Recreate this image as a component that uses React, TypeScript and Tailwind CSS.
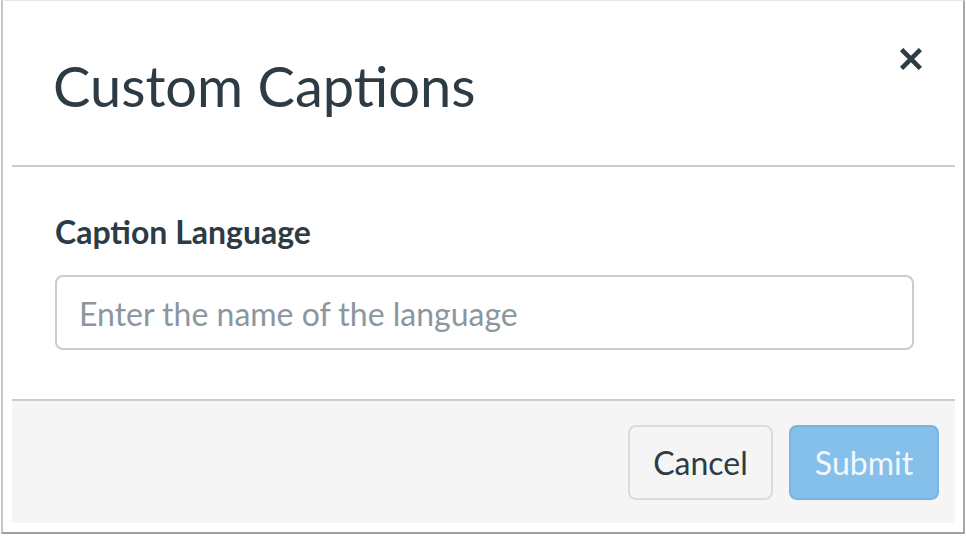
import React from "react";

export default function App() {
  return (
    <div className="w-[966px] h-[536px] bg-white overflow-hidden" style={{ fontFamily: "Lato, 'Open Sans', sans-serif" }}>
      <div className="ml-[1px] w-[964px] h-[534px] box-border border-t border-t-[#e6e6e6] border-l-2 border-l-[#c6c6c6] border-r-2 border-r-[#a8a8a8] border-b-2 border-b-[#a0a0a0] bg-white pl-[9px] pr-[8px] pb-[9px] flex flex-col">
        {/* Header */}
        <div className="h-[164px] flex justify-between items-start shrink-0">
          <h1 className="mt-[53px] pl-[41px] text-[56px] leading-[64px] font-normal text-[#2d3b45]">Custom Captions</h1>
          <button aria-label="Close" className="mt-[47px] mr-[33px] w-[22px] h-[22px] text-[#2d3b45]">
            <svg viewBox="0 0 22 22" width="22" height="22">
              <path d="M3.2 3.2 L18.8 18.8 M18.8 3.2 L3.2 18.8" stroke="currentColor" strokeWidth="4.6" strokeLinecap="square" fill="none" />
            </svg>
          </button>
        </div>
        <div className="h-[2px] bg-[#c7cdd1] shrink-0" />
        {/* Body */}
        <div className="h-[232px] pl-[43px] shrink-0">
          <label className="block mt-[45px] text-[32px] leading-[40px] font-bold text-[#2d3b45]">Caption Language</label>
          <input
            type="text"
            placeholder="Enter the name of the language"
            className="mt-[23px] block w-[859px] h-[75px] box-border border-2 border-[#c7cdd1] rounded-[8px] bg-white pl-[22px] pr-[22px] pt-[16px] pb-[15px] text-[32px] leading-[40px] text-[#2d3b45] placeholder:text-[#8b969e] outline-none"
            style={{ fontFamily: "Lato, 'Open Sans', sans-serif" }}
          />
        </div>
        {/* Footer */}
        <div className="flex-1 border-t-2 border-t-[#c7cdd1] bg-[#f5f5f5] flex justify-end items-start pt-[24px] pr-[16px] gap-[16px]">
          <button className="w-[145px] h-[75px] box-border border-2 border-[#d9dcde] rounded-[8px] bg-[#f5f5f5] text-[32px] text-[#2d3b45] leading-none">
            Cancel
          </button>
          <button className="w-[150px] h-[75px] box-border border-2 border-[#78b4df] rounded-[8px] bg-[#85c0eb] text-[32px] text-[#f2f8fd] leading-none">
            Submit
          </button>
        </div>
      </div>
    </div>
  );
}
